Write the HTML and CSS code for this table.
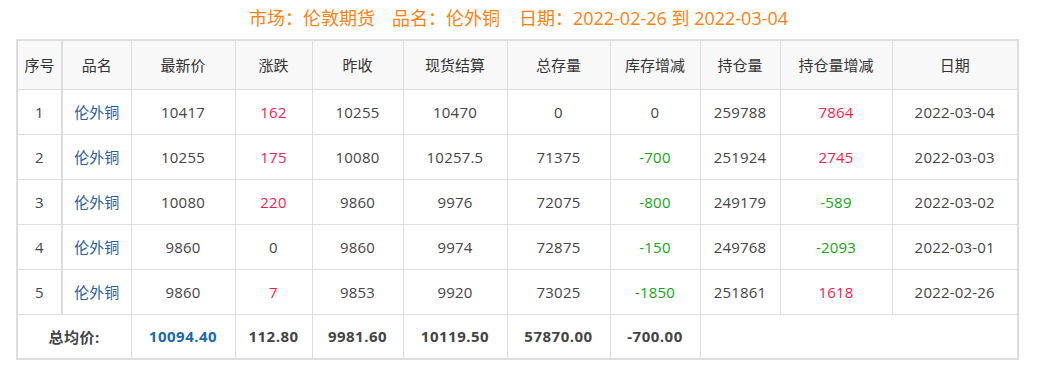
FILE: index.html
```html
<!DOCTYPE html>
<html lang="zh">
<head>
<meta charset="utf-8">
<link rel="stylesheet" href="styles.css">
</head>
<body>
<div class="page">
  <h1 class="title"><span>市场：伦敦期货</span><span class="gap1">品名：伦外铜</span><span class="gap2">日期：2022-02-26 到 2022-03-04</span></h1>
  <table class="grid">
    <colgroup>
      <col class="c1"><col class="c2"><col class="c3"><col class="c4"><col class="c5"><col class="c6"><col class="c7"><col class="c8"><col class="c9"><col class="c10"><col class="c11">
    </colgroup>
    <thead>
      <tr><th class="first">序号</th><th>品名</th><th>最新价</th><th>涨跌</th><th>昨收</th><th>现货结算</th><th>总存量</th><th>库存增减</th><th>持仓量</th><th>持仓量增减</th><th>日期</th></tr>
    </thead>
    <tbody>
      <tr><td class="first">1</td><td class="name">伦外铜</td><td>10417</td><td class="up">162</td><td>10255</td><td>10470</td><td>0</td><td>0</td><td>259788</td><td class="up">7864</td><td>2022-03-04</td></tr>
      <tr><td class="first">2</td><td class="name">伦外铜</td><td>10255</td><td class="up">175</td><td>10080</td><td>10257.5</td><td>71375</td><td class="down">-700</td><td>251924</td><td class="up">2745</td><td>2022-03-03</td></tr>
      <tr><td class="first">3</td><td class="name">伦外铜</td><td>10080</td><td class="up">220</td><td>9860</td><td>9976</td><td>72075</td><td class="down">-800</td><td>249179</td><td class="down">-589</td><td>2022-03-02</td></tr>
      <tr><td class="first">4</td><td class="name">伦外铜</td><td>9860</td><td>0</td><td>9860</td><td>9974</td><td>72875</td><td class="down">-150</td><td>249768</td><td class="down">-2093</td><td>2022-03-01</td></tr>
      <tr><td class="first">5</td><td class="name">伦外铜</td><td>9860</td><td class="up">7</td><td>9853</td><td>9920</td><td>73025</td><td class="down">-1850</td><td>251861</td><td class="up">1618</td><td>2022-02-26</td></tr>
    </tbody>
    <tfoot>
      <tr><td colspan="2">总均价:</td><td class="avg">10094.40</td><td>112.80</td><td>9981.60</td><td>10119.50</td><td>57870.00</td><td>-700.00</td><td colspan="3"></td></tr>
    </tfoot>
  </table>
</div>
</body>
</html>
```

FILE: styles.css
```css
* { box-sizing: border-box; }
html, body { margin: 0; background: #fff; }
body {
  font-family: "Open Sans", "Noto Sans CJK SC", sans-serif;
  color: #444;
}
.page {
  padding: 5px 16px 0 16px;
  width: 1037px;
}
.title {
  margin: 0 0 8px 0;
  font-size: 18px;
  font-weight: normal;
  line-height: 26px;
  color: #ff7f0e;
  text-align: center;
}
.title .gap1 { margin-left: 17px; }
.title .gap2 { margin-left: 19px; }
.grid {
  border-collapse: collapse;
  table-layout: fixed;
  width: 1001px;
  border: 2px solid #dddddd;
  font-size: 15px;
}
.c1 { width: 45px; }
.c2 { width: 69px; }
.c3 { width: 104px; }
.c4 { width: 77px; }
.c5 { width: 91px; }
.c6 { width: 104px; }
.c7 { width: 103px; }
.c8 { width: 90px; }
.c9 { width: 80px; }
.c10 { width: 112px; }
.c11 { width: 126px; }
.grid th, .grid td {
  border: 1px solid #dddddd;
  text-align: center;
  padding: 0;
  white-space: nowrap;
  letter-spacing: 0.2px;
}
.grid th {
  height: 49px;
  background: #f8f8f8;
  font-weight: normal;
  color: #333;
  letter-spacing: 0;
}
.grid td { height: 45px; }
.grid .first { border-right: 2px solid #dddddd; }
.grid .name { color: #2a5f93; letter-spacing: 0; }
.grid .up { color: #ff1a4b; }
.grid .down { color: #15a515; }
.grid tfoot td { font-weight: bold; color: #444; letter-spacing: 0.5px; }
.grid tfoot td.avg { color: #1a6aa8; }
```
